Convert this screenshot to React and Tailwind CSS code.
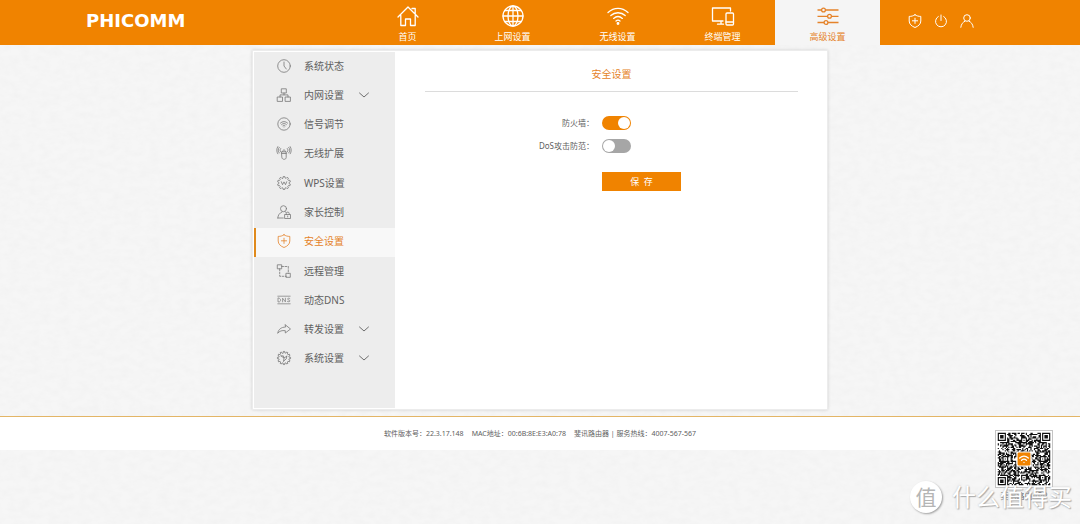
import { useState } from 'react';

const ico = { fill: 'none', stroke: 'currentColor', strokeLinecap: 'round', strokeLinejoin: 'round' };

function NavIcon({ children }) {
  return (
    <svg viewBox="0 0 24 24" className="h-6 w-6" strokeWidth="1.3" aria-hidden="true" {...ico}>
      {children}
    </svg>
  );
}

function SideIcon({ active, children }) {
  return (
    <svg
      viewBox="0 0 14 14"
      className={`h-3.5 w-3.5 shrink-0 overflow-visible ${active ? '' : 'text-[#777]'}`}
      strokeWidth="0.8"
      aria-hidden="true"
      {...ico}
    >
      {children}
    </svg>
  );
}

const topNav = [
  {
    label: '首页',
    icon: <path d="M2 13 12 3l10 10M16 4.5h3.2V10M4.8 11.500V21.500H9.500V15h5v6.500h4.700V11.500" />,
  },
  {
    label: '上网设置',
    icon: (
      <>
        <circle cx="12" cy="12" r="10" />
        <ellipse cx="12" cy="12" rx="5" ry="10" />
        <path d="M12 2v20M2 12h20M3.800 6.500h16.400M3.800 17.500h16.400" />
      </>
    ),
  },
  {
    label: '无线设置',
    icon: (
      <>
        <path d="M2 8.500C8 3 16 3 22 8.500M4.800 11.500c4-3.700 10.400-3.700 14.400 0M7.600 14.400c2.600-2.300 6.200-2.300 8.800 0" />
        <path d="M10 17c1.200-1 2.800-1 4 0" />
        <circle cx="12" cy="19.500" r="0.8" fill="currentColor" />
      </>
    ),
  },
  {
    label: '终端管理',
    icon: (
      <>
        <path d="M12 17H1.500V4h18v3M10 17v3M6.500 20.200h6" />
        <rect x="15" y="9" width="7.500" height="12" rx="1" />
        <path d="M15 18h7.500" />
      </>
    ),
  },
  {
    label: '高级设置',
    active: true,
    icon: (
      <>
        <path d="M1.500 6h4M9.500 6h13M1.500 12.300h10M15.500 12.300h7M1.500 18.500h6.500M12 18.500h10.500" strokeLinecap="butt" />
        <circle cx="7.500" cy="6" r="1.900" />
        <circle cx="13.500" cy="12.300" r="1.900" />
        <circle cx="10" cy="18.500" r="1.900" />
      </>
    ),
  },
];

function cog(teeth, outer, inner) {
  const step = (Math.PI * 2) / teeth;
  const points = [];
  for (let i = 0; i < teeth; i++) {
    for (const [r, offset] of [[inner, -0.3], [outer, -0.2], [outer, 0.2], [inner, 0.3]]) {
      const a = step * (i + offset);
      points.push(`${(7 + r * Math.sin(a)).toFixed(2)} ${(7 - r * Math.cos(a)).toFixed(2)}`);
    }
  }
  return `M${points.join('L')}Z`;
}

const sideNav = [
  { label: '系统状态', icon: <><circle cx="7" cy="7" r="6.300" /><path d="M7 3v4l2.300 3" /></> },
  {
    label: '内网设置',
    more: true,
    icon: <path d="M4.700.800h4.600v4.200H4.700zM.6 9h4.900v4.400H.6zM8.500 9h4.900v4.400H8.500zM7 5v1.800M3 9V6.900h8V9" />,
  },
  {
    label: '信号调节',
    icon: <><circle cx="7" cy="7" r="6.200" /><path d="M3.400 6.100c2.100-2 5.100-2 7.200 0M4.600 7.500c1.500-1.300 3.300-1.300 4.800 0M5.900 8.800c.7-.5 1.500-.5 2.200 0M7 9.900v.1" /></>,
  },
  {
    label: '无线扩展',
    icon: <path d="M4.800 5.800h4.400v5.700c0 2.500-4.400 2.500-4.400 0zM4.800 7.500h4.400M5.700 5.800c-.7-2.600 3.300-2.600 2.600 0M3.700 5.900c-.9-1.100-.9-2.300 0-3.400M10.300 5.900c.9-1.100.9-2.300 0-3.400M2.300 7c-1.500-1.700-1.500-4 0-5.700M11.700 7c1.500-1.700 1.500-4 0-5.700M.8 7.800c-1.400-2.200-1.400-5 0-7.200M13.200 7.800c1.400-2.200 1.400-5 0-7.200" />,
  },
  {
    label: 'WPS设置',
    icon: <path d={`${cog(10, 6.500, 5.200)}M4.300 5.700l1.200 3L7 5.900l1.500 2.800 1.200-3`} />,
  },
  {
    label: '家长控制',
    icon: <><circle cx="6.500" cy="3.700" r="3" /><path d="M.8 13c.2-3 1.700-5 4.200-6M8 6.800l1 .5M.8 13h5.500M8 9.500h5.500v4H8zM9.300 9.500V8.300c0-1.600 2.900-1.600 2.900 0v1.200M10.700 11v1" /></>,
  },
  {
    label: '安全设置',
    active: true,
    icon: <path d="M7 .8C5.300 2 3.300 2.400 1.200 2.400V7c0 3 2.300 5.200 5.800 6.500C10.500 12.200 12.800 10 12.800 7V2.400C10.700 2.400 8.700 2 7 .8zM7 4.200v5.200M4.400 6.800h5.200" />,
  },
  {
    label: '远程管理',
    icon: <><path d="M.7.800h4v4h-4zM9.300 9.300h4v4h-4z" /><path d="M4.700 2.500h6.600v6.800M2.700 4.800v7.500h6.600" strokeDasharray="1.800 1.500" /></>,
  },
  {
    label: '动态DNS',
    icon: <path strokeWidth="0.7" d="M.8 3.200h12.400M.8 10.800h12.400M1 5.200v3.700h1.200c1.900-.3 1.900-3.400 0-3.700zM5.600 8.900V5.200l2.800 3.700V5.200M12.800 5.500c-.9-.7-2.300-.4-2.200.6.1 1.100 2.300.7 2.300 1.800 0 1-1.500 1.200-2.500.5" />,
  },
  { label: '转发设置', more: true, icon: <path d="M8.300 2.800 13.500 7l-5.200 4V8.700C5 8.200 2.500 9 .7 11.300 1.300 7.500 4 5.200 8.300 5z" /> },
  {
    label: '系统设置',
    more: true,
    icon: <path d={`${cog(12, 6.600, 5.200)}M4 4.900h2.400L7 7l-.4 3.200M4 4.900 7 7l2.800-1.800M9.800 5.200 9.300 7.800 6.600 10.200`} />,
  },
];

const N = 45;
const finders = [[0, 0], [N - 7, 0], [0, N - 7]];

function isDark(x, y) {
  for (const [fx, fy] of finders) {
    const dx = x - fx;
    const dy = y - fy;
    if (dx >= -1 && dx <= 7 && dy >= -1 && dy <= 7) {
      const ring = Math.max(Math.abs(dx - 3), Math.abs(dy - 3));
      return ring === 3 || ring <= 1;
    }
  }
  for (const ax of [6, 22, 38]) {
    for (const ay of [6, 22, 38]) {
      const ring = Math.max(Math.abs(x - ax), Math.abs(y - ay));
      if (ring <= 2) return ring !== 1;
    }
  }
  let h = Math.imul(x + 11, 374761393) + Math.imul(y + 7, 668265263);
  h = Math.imul(h ^ (h >>> 13), 1274126177);
  return ((h ^ (h >>> 16)) & 255) < 145;
}

let qrPath = '';
for (let y = 0; y < N; y++) {
  for (let x = 0; x < N; x++) {
    if (isDark(x, y)) qrPath += `M${x} ${y}h1v1h-1z`;
  }
}

function QrCode() {
  return (
    <svg viewBox="-1.5 -1.500 48 48" className="h-[58px] w-[58px] border border-[#c4c4c4] bg-white" role="img" aria-label="APP">
      <path d={qrPath} fill="#111" />
      <rect x="16" y="16" width="13" height="13" rx="1" fill="#fff" />
      <rect x="17" y="17" width="11" height="11" rx="1" fill="#f08300" />
      <g fill="none" stroke="#fff" strokeWidth="1.1" strokeLinecap="round">
        <path d="M18.800 21.700c2.200-2 5.200-2 7.400 0M20.400 23.600c1.300-1.200 2.900-1.200 4.200 0M22.500 25.500v.1" />
      </g>
    </svg>
  );
}

function Toggle({ id, label, initial }) {
  const [on, setOn] = useState(initial);
  return (
    <div className="flex h-[23px] items-center">
      <label htmlFor={id} className="w-[169px] text-right text-[8px]">{label}</label>
      <input
        id={id}
        type="checkbox"
        role="switch"
        checked={on}
        onChange={(e) => setOn(e.target.checked)}
        className="ml-2 flex h-3.5 w-[29px] appearance-none items-center rounded-full bg-[#a6a6a6] px-px before:block before:h-3 before:w-3 before:rounded-full before:bg-white checked:justify-end checked:bg-[#f08300]"
      />
    </div>
  );
}

function PaperTexture() {
  return (
    <svg className="absolute inset-0 -z-10 h-full w-full" aria-hidden="true">
      <filter id="paper" x="0" y="0" width="100%" height="100%">
        <feTurbulence type="fractalNoise" baseFrequency="0.1 0.16" numOctaves="3" seed="4" />
        <feColorMatrix values="0 0 0 0 0.5  0 0 0 0 0.5  0 0 0 0 0.5  0.11 0 0 0 -0.035" />
      </filter>
      <rect width="100%" height="100%" filter="url(#paper)" />
    </svg>
  );
}

export default function App() {
  return (
    <div className="relative isolate flex min-h-screen flex-col overflow-hidden bg-[#f6f6f6] font-['Noto_Sans','Noto_Sans_CJK_SC',sans-serif] text-[#606060]">
      <PaperTexture />
      <header className="bg-[#f08300] text-white">
        <div className="mx-auto flex h-[45px] max-w-[908px]">
          <a href="#home" className="flex w-[269px] items-center pb-1 font-['DejaVu_Sans',sans-serif] text-[18px] leading-none font-bold">PHICOMM</a>
          <nav className="flex">
            {topNav.map((item) => (
              <a
                key={item.label}
                href="#nav"
                aria-current={item.active ? 'page' : undefined}
                className={`flex w-[105px] flex-col items-center pt-1 ${item.active ? 'bg-[#f5f5f5] text-[#e5832a]' : ''}`}
              >
                <NavIcon>{item.icon}</NavIcon>
                <span className="mt-[3px] text-[9px] leading-3">{item.label}</span>
              </a>
            ))}
          </nav>
          <div className="ml-7 flex items-center gap-3 pb-1">
            <button type="button" aria-label="安全">
              <svg viewBox="0 0 14 14" className="h-3.5 w-3.5" {...ico}>
                <path d="M7 .8C5.300 2 3.300 2.400 1.200 2.400V7c0 3 2.300 5.200 5.800 6.500C10.500 12.200 12.800 10 12.800 7V2.400C10.700 2.400 8.700 2 7 .8zM7 4.200v5.200M4.400 6.800h5.200" />
              </svg>
            </button>
            <button type="button" aria-label="重启">
              <svg viewBox="0 0 14 14" className="h-3.5 w-3.5" {...ico}>
                <path d="M7 1v5.500M4.300 2.500a5.500 5.500 0 1 0 5.400 0" />
              </svg>
            </button>
            <button type="button" aria-label="用户">
              <svg viewBox="0 0 14 14" className="h-3.5 w-3.5" {...ico}>
                <circle cx="7" cy="4" r="3.300" />
                <path d="M.8 13.300C1.200 10 3 8 5 7.200M13.200 13.300C12.800 10 11 8 9 7.200" />
              </svg>
            </button>
          </div>
        </div>
      </header>

      <div className="mx-auto mt-[5px] flex w-full max-w-[576px] border border-[#ececec] bg-white p-px shadow-[0_0_3px_rgba(0,0,0,0.15)]">
        <aside className="min-h-[356px] w-[141px] shrink-0 bg-[#ededed]">
          <nav className="grid h-[322px] auto-rows-fr">
            {sideNav.map((item) => (
              <a
                key={item.label}
                href="#menu"
                aria-current={item.active ? 'page' : undefined}
                className={`flex items-center border-l-2 pb-0.5 pl-[21px] text-[10px] ${item.active ? 'border-[#e08a1c] bg-[#f8f8f8] text-[#e5832a]' : 'border-transparent'}`}
              >
                <SideIcon active={item.active}>{item.icon}</SideIcon>
                <span className="ml-[13px] w-[55px] leading-none">{item.label}</span>
                {item.more && (
                  <svg viewBox="0 0 10 6" className="h-1.5 w-2.5 overflow-visible" strokeWidth="0.9" aria-hidden="true" {...ico}>
                    <path d="m.5 1 4.500 4 4.500-4" />
                  </svg>
                )}
              </a>
            ))}
          </nav>
        </aside>
        <main className="min-w-0 flex-1 pr-7 pl-[30px]">
          <h1 className="flex h-10 items-end justify-center border-b border-[#dcdcdc] pb-[9px] text-[10px] text-[#e5832a]">安全设置</h1>
          <form className="pt-[19px]" onSubmit={(e) => e.preventDefault()}>
            <Toggle id="firewall" label="防火墙：" initial={true} />
            <Toggle id="dos" label="DoS攻击防范：" initial={false} />
            <button type="submit" className="mt-[15px] ml-[177px] h-[19px] w-[79px] bg-[#f08300] text-[9px] leading-none text-white">保&nbsp; 存</button>
          </form>
        </main>
      </div>

      <footer className="mt-1.5 flex h-[34px] items-center justify-center gap-2 border-t border-[#e3b566] bg-white pt-0.5 text-[7px]">
        <span>软件版本号：22.3.17.148</span>
        <span>MAC地址：00:6B:8E:E3:A0:78</span>
        <span>斐讯路由器 | 服务热线：4007-567-567</span>
      </footer>

      <div className="absolute top-[430px] right-[27px] flex flex-col items-center">
        <QrCode />
        <span className="mt-0.5 text-[8px] leading-3">斐讯路由APP</span>
      </div>

      <div className="absolute top-[481px] right-2 flex items-center gap-2.5 text-white">
        <span className="flex h-8 w-8 items-center justify-center rounded-full bg-white text-[21px] leading-none text-[#b5b5b5] shadow-[1px_1px_2px_rgba(0,0,0,0.35)]">值</span>
        <span className="text-[24px] leading-8 [text-shadow:1px_1px_1px_#aaa,0_0_2px_#bbb]">什么值得买</span>
      </div>
    </div>
  );
}
